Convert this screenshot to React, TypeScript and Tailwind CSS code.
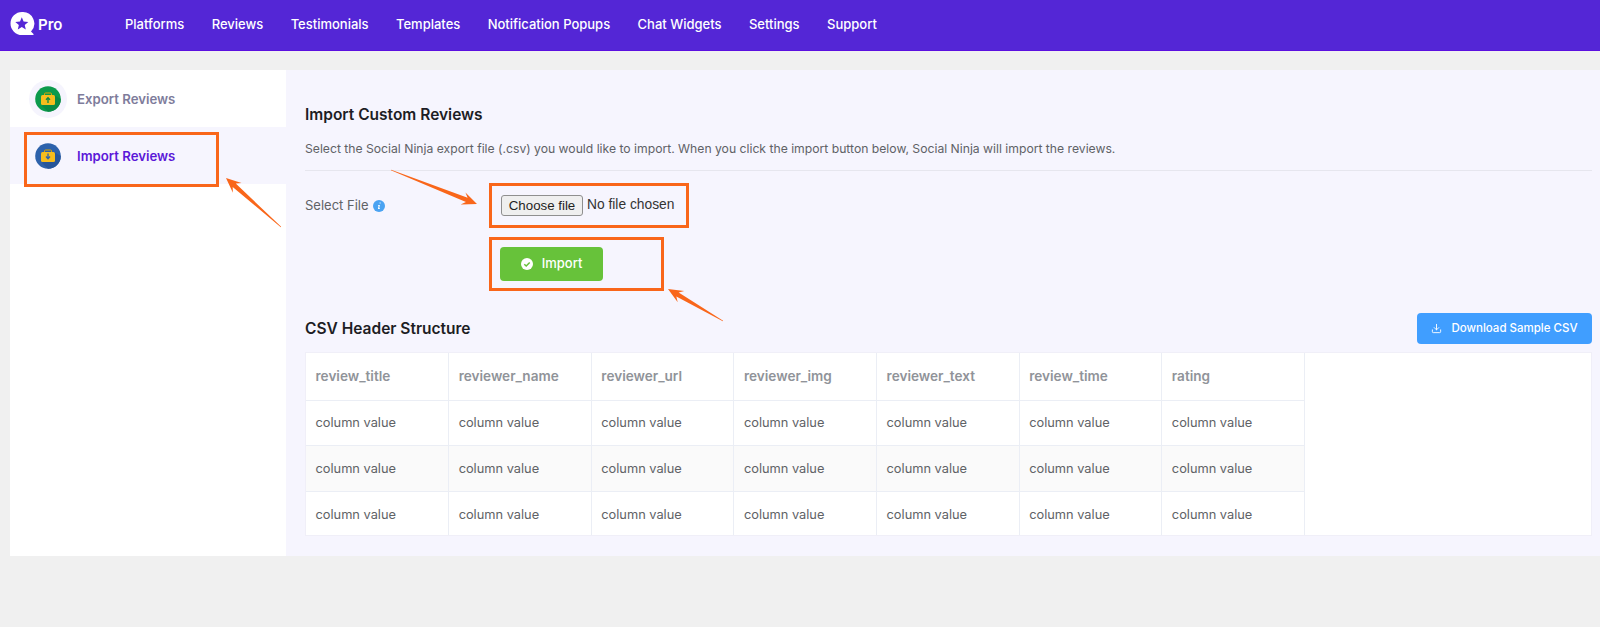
import React from "react";
import { Download } from "lucide-react";

const navItems = [
  "Platforms",
  "Reviews",
  "Testimonials",
  "Templates",
  "Notification Popups",
  "Chat Widgets",
  "Settings",
  "Support",
];

const columns = [
  "review_title",
  "reviewer_name",
  "reviewer_url",
  "reviewer_img",
  "reviewer_text",
  "review_time",
  "rating",
];

// tapered annotation arrow, tail to tip
function Arrow({ x1, y1, x2, y2 }: { x1: number; y1: number; x2: number; y2: number }) {
  const len = Math.hypot(x2 - x1, y2 - y1);
  const ux = (x2 - x1) / len;
  const uy = (y2 - y1) / len;
  const at = (along: number, side: number) =>
    `${x1 + ux * along - uy * side},${y1 + uy * along + ux * side}`;
  const points = [
    at(0, 0.3),
    at(len - 11, 2.3),
    at(len - 15, 6.5),
    at(len, 0),
    at(len - 15, -6.5),
    at(len - 11, -2.3),
    at(0, -0.3),
  ].join(" ");
  return <polygon points={points} fill="#f9661a" />;
}

function Logo() {
  return (
    <svg width="26" height="28" viewBox="0 0 26 28">
      <path d="M12 1a11.500 11.500 0 1 0 0 23h11.500v-1l-2.500 -2.500a11.500 11.500 0 0 0 -9 -19.500z" fill="#fff" />
      <polygon
        points="11.800,6.200 13.600,10.500 18.300,10.900 14.750,13.950 15.800,18.500 11.800,16.100 7.800,18.500 8.850,13.950 5.300,10.900 10,10.500"
        fill="#5426d6"
      />
    </svg>
  );
}

function FolderIcon({ bg, shade, arrow, up }: { bg: string; shade: string; arrow: string; up: boolean }) {
  return (
    <svg width="26" height="26" viewBox="0 0 26 26">
      <circle cx="13" cy="13" r="12.800" fill={bg} />
      <path d="M13 25.800a12.800 12.800 0 0 0 12.800 -12.800l-6.800 -4l-12 11z" fill={shade} />
      <path d="M9.500 9.500v-1.500a1 1 0 0 1 1 -1h5a1 1 0 0 1 1 1v1.500" fill="none" stroke="#e0a400" strokeWidth="1" />
      <rect x="6" y="9" width="14" height="10" rx="1.500" fill="#f7bd1d" />
      {up ? (
        <path d="M13 17v-5M11 13.800l2 -2.200l2 2.200" fill="none" stroke={arrow} strokeWidth="1.300" />
      ) : (
        <path d="M13 10.500v5M11 13.500l2 2.200l2 -2.200" fill="none" stroke={arrow} strokeWidth="1.300" />
      )}
    </svg>
  );
}

function CheckCircle() {
  return (
    <svg width="12" height="12" viewBox="0 0 12 12">
      <circle cx="6" cy="6" r="6" fill="#fff" />
      <path d="M3.300 6.200l1.900 1.800l3.500 -3.600" fill="none" stroke="#67c23a" strokeWidth="1.500" />
    </svg>
  );
}

function InfoIcon() {
  return (
    <svg width="12" height="12" viewBox="0 0 12 12">
      <circle cx="6" cy="6" r="6" fill="#4aa3f2" />
      <path d="M6.600 2.400h1v1.100h-1zM5 5h1.900l-.7 3.300h.8v.8h-2.100l.7 -3.300h-.6z" fill="#fff" />
    </svg>
  );
}

export default function App() {
  return (
    <div className="relative min-h-[627px] bg-[#f0f0f0] font-['Inter',sans-serif]">
      {/* Top nav */}
      <nav className="flex h-[51px] items-center border-b border-[#5b10e0] bg-[#5426d6] pl-[10px] text-white">
        <div className="flex w-[115px] items-center gap-[2px]">
          <Logo />
          <span className="text-[15px] font-semibold">Pro</span>
        </div>
        <div className="flex gap-[27.400px] text-[13px] font-medium">
          {navItems.map((item) => (
            <a key={item} href="#" className="whitespace-nowrap">
              {item}
            </a>
          ))}
        </div>
      </nav>

      <div className="ml-[10px] mt-[19px] flex h-[486px]">
        {/* Sidebar */}
        <aside className="w-[276px] bg-white text-[13.200px] font-semibold">
          <div className="flex h-[57px] items-center pl-[19px] text-[#7e7c9b]">
            <div className="flex h-[38px] w-[38px] items-center justify-center rounded-full bg-[#f5f4fd]">
              <FolderIcon bg="#0c9a4c" shade="#0a8a44" arrow="#0c8a44" up />
            </div>
            <span className="ml-[10px] pt-[2px]">Export Reviews</span>
          </div>
          <div className="flex h-[57px] items-center bg-[#f6f5fe] pl-[19px] text-[#5b18d8]">
            <div className="flex h-[38px] w-[38px] items-center justify-center rounded-full">
              <FolderIcon bg="#2d62ab" shade="#27569a" arrow="#2d62ab" up={false} />
            </div>
            <span className="ml-[10px] pt-[2px]">Import Reviews</span>
          </div>
        </aside>

        {/* Main panel */}
        <main className="flex-1 bg-[#f6f5fe] pl-[19px] pr-[8px] pt-[33px]">
          <h2 className="text-[15.500px] font-semibold leading-6 text-[#1d1d24]">Import Custom Reviews</h2>
          <p className="mt-[12px] text-[12.180px] leading-5 text-[#606266]">
            Select the Social Ninja export file (.csv) you would like to import. When you click the import button below, Social Ninja will import the reviews.
          </p>
          <div className="mt-[11px] border-t border-[#e6e6ee]" />

          <div className="mt-[24px] flex">
            <label className="flex h-[21px] w-[196px] items-center gap-[4px] text-[13px] text-[#606266]">
              Select File <InfoIcon />
            </label>
            <div>
              <div className="flex h-[21px] items-center gap-[4px] text-[#1f1f1f]">
                <button className="h-[21px] w-[82px] rounded-[3px] border border-[#8f8f8f] bg-[#efefef] text-[13.300px] font-['Liberation_Sans',sans-serif]">
                  Choose file
                </button>
                <span className="text-[13.800px] text-[#333333] font-['Liberation_Sans',sans-serif]">No file chosen</span>
              </div>
              <button className="-ml-[1px] mt-[31px] flex h-[34px] w-[103px] items-center justify-center gap-[9px] rounded-[4px] bg-[#67c23a] text-[13px] font-medium text-white">
                <CheckCircle />
                Import
              </button>
            </div>
          </div>

          <div className="mt-[32px] flex h-[31px] items-center justify-between">
            <h2 className="pt-[1px] text-[15.500px] font-semibold text-[#1d1d24]">CSV Header Structure</h2>
            <button className="flex h-[31px] w-[175px] items-center justify-center gap-[9px] rounded-[4px] bg-[#409eff] text-[11.500px] font-medium text-white">
              <Download size={11} />
              Download Sample CSV
            </button>
          </div>

          <div className="mt-[8px] h-[184px] overflow-hidden border border-[#f0eff8] bg-white">
            <table className="w-[999px] table-fixed border-collapse text-[12.800px] text-[#606266]">
              <thead>
                <tr className="h-[47px] border-b border-[#ebeef5]">
                  {columns.map((c) => (
                    <th key={c} className="border-r border-[#ebeef5] pl-[9.500px] text-left text-[13.600px] font-semibold text-[#909399]">
                      {c}
                    </th>
                  ))}
                </tr>
              </thead>
              <tbody>
                {[0, 1, 2].map((row) => (
                  <tr
                    key={row}
                    className={
                      row === 1
                        ? "h-[45.600px] border-b border-[#ebeef5] bg-[#fafafa]"
                        : row === 0
                          ? "h-[45.600px] border-b border-[#ebeef5]"
                          : "h-[45.600px]"
                    }
                  >
                    {columns.map((c) => (
                      <td key={c} className="border-r border-[#ebeef5] pl-[9.500px]">
                        column value
                      </td>
                    ))}
                  </tr>
                ))}
              </tbody>
            </table>
          </div>
        </main>
      </div>

      {/* Annotations drawn over the screenshot */}
      <div className="absolute left-[24px] top-[132px] h-[55px] w-[195px] border-[3px] border-[#f9661a]" />
      <div className="absolute left-[489px] top-[183px] h-[45px] w-[200px] border-[3px] border-[#f9661a]" />
      <div className="absolute left-[489px] top-[237px] h-[54px] w-[175px] border-[3px] border-[#f9661a]" />
      <svg className="pointer-events-none absolute left-0 top-0" width="1600" height="627">
        <Arrow x1={281} y1={227} x2={226} y2={178} />
        <Arrow x1={391} y1={170} x2={477} y2={204} />
        <Arrow x1={723} y1={321} x2={668} y2={289} />
      </svg>
    </div>
  );
}
